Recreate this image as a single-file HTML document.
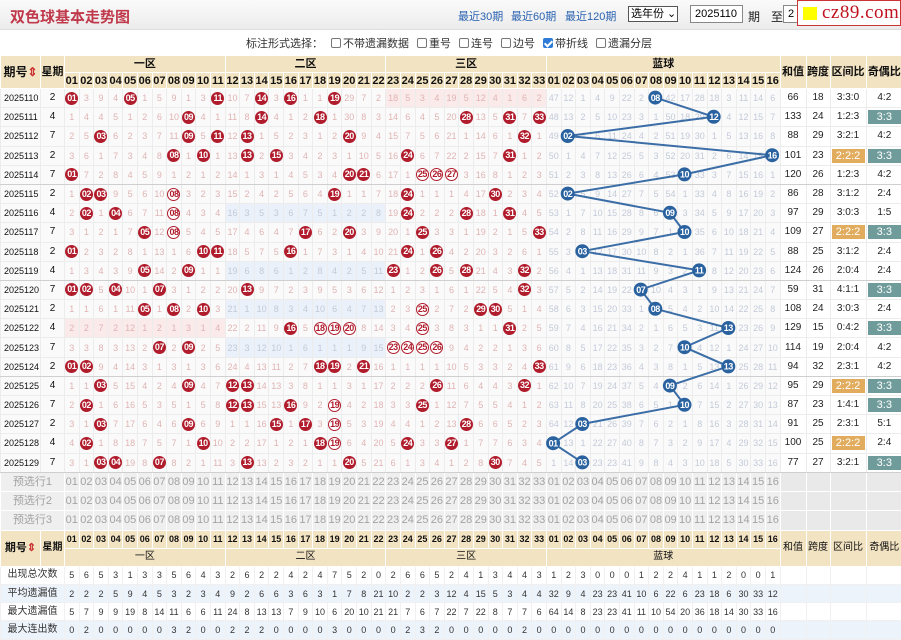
<!DOCTYPE html>
<html><head><meta charset="utf-8"><style>
*{box-sizing:border-box;margin:0;padding:0}
body{width:901px;height:639px;overflow:hidden;background:#fff;font-family:"Liberation Sans","Noto Sans CJK SC",sans-serif;position:relative}
#top{position:absolute;left:0;top:0;width:901px;height:30px;background:linear-gradient(#fafafa,#ececec);border-bottom:1px solid #ddd}
#top h1{position:absolute;left:10px;top:6px;font-size:15px;color:#c0394b;font-weight:bold;letter-spacing:0px}
.lk{position:absolute;top:8px;font-size:11px;color:#2a62b0}
.sel{position:absolute;left:628px;top:6px;width:50px;height:16px;border:1px solid #555;font-size:11px;line-height:14px;padding-left:2px;background:#fff}
.inp{position:absolute;top:5px;height:18px;border:1px solid #888;font-size:11px;line-height:16px;padding-left:4px;background:#fff}
.tx{position:absolute;top:8px;font-size:12px;color:#222}
#logo{position:absolute;left:797px;top:0;width:104px;height:26px;background:#fff;border:1px solid #c33}
#logo i{position:absolute;left:5px;top:6px;width:14px;height:13px;background:#ff0}
#logo span{position:absolute;left:24px;top:1px;font:19px "Liberation Serif",serif;color:#c1121f;letter-spacing:0.5px}
#opt{position:absolute;left:246px;top:35px;font-size:11px;color:#333;white-space:nowrap}
#opt .c{display:inline-block;width:10px;height:10px;border:1px solid #777;border-radius:2px;vertical-align:-1px;margin:0 2px 0 8px;background:#fff}
#opt .k{background:#2f7bd8;border-color:#2f7bd8;position:relative}
#opt .k:after{content:"";position:absolute;left:2px;top:0px;width:3px;height:6px;border:solid #fff;border-width:0 2px 2px 0;transform:rotate(45deg)}
table{position:absolute;left:0;top:55px;width:901px;border-collapse:collapse;table-layout:fixed}
td{border:1px solid #ececec;text-align:center;font-size:9px;color:#e0b4b4;overflow:hidden;white-space:nowrap;padding:0;line-height:10px}
col.z{border-left:1px solid #c9c9c9}
.h td{background:#f2e3c2;color:#111;font-weight:bold;font-size:11px;border-color:#fff}
.h1 td{height:17px}.h2 td{height:16px}
.h .n{font-size:11px;letter-spacing:-0.3px}
tr.d td{height:19.2px;background:#fafafa}
tr.d td.i{color:#111;font-size:9px;text-align:left;padding-left:3px}
tr.d td.w{color:#111;font-size:10px}
tr.d td.bl{color:#c3cad8}
tr.d td.r{color:#222;font-size:10px;background:#fff}
tr.d td.p{background:#fbeaea}
tr.d td.q{background:#eaf1fa;color:#c3cad8}
tr.g td{border-bottom:1px solid #cfcfcf}
b{display:inline-block;width:13px;height:13px;border-radius:50%;background:#b01c2c;color:#fff;font:bold 9px/13px "Liberation Sans",sans-serif;letter-spacing:-0.5px}
b.o{background:#fff;border:1.5px solid #b01c2c;color:#b01c2c;line-height:10px}
.y{display:block;margin:2px 1px;height:14px;line-height:14px;color:#fff;font-size:11px}
.ya{background:#e1ac5d}.yb{background:#6f9c9b}
tr.s td{height:19.3px;background:#efefef;color:#a3a3a3;font-size:11px;border-color:#fff}
tr.s td.e{background:#e9e9e9}
.hb td{background:#f2e3c2;color:#111;font-size:9px;font-weight:bold;border-color:#fff;height:18px}
.hb td.l{font-size:10px;font-weight:normal}
tr.t td{height:18.25px;color:#333;font-size:9px;background:#fff;border-color:#f0f0f0}
tr.t.u td{background:#edf3fa}
tr.t td.lb{font-size:10px;color:#333}
svg{position:absolute;left:0;top:0}
</style></head><body>
<div id="top"><h1>双色球基本走势图</h1>
<span class="lk" style="left:458px">最近30期</span><span class="lk" style="left:511px">最近60期</span><span class="lk" style="left:565px">最近120期</span>
<div class="sel">选年份 ⌄</div>
<div class="inp" style="left:690px;width:53px">2025110</div><span class="tx" style="left:748px">期</span><span class="tx" style="left:771px">至</span>
<div class="inp" style="left:783px;width:20px">2</div>
<div id="logo"><i></i><span>cz89.com</span></div></div>
<div id="opt">标注形式选择：<span class="c"></span>不带遗漏数据<span class="c"></span>重号<span class="c"></span>连号<span class="c"></span>边号<span class="c k"></span>带折线<span class="c"></span>遗漏分层</div>
<table>
<colgroup><col style="width:40px"><col style="width:24px"><col span="11" style="width:14.6px"><col class="z" span="11" style="width:14.6px"><col class="z" span="11" style="width:14.6px"><col class="z" span="16" style="width:14.6px"><col class="z" style="width:26px"><col style="width:24px"><col style="width:36px"><col style="width:36.6px"></colgroup>
<tr class="h h1"><td rowspan="2" style="font-size:12px">期号<span style="color:#c33">⇕</span></td><td rowspan="2" style="font-size:11px">星期</td><td colspan="11">一区</td><td colspan="11">二区</td><td colspan="11">三区</td><td colspan="16">蓝球</td><td rowspan="2">和值</td><td rowspan="2">跨度</td><td rowspan="2">区间比</td><td rowspan="2">奇偶比</td></tr>
<tr class="h h2 n"><td>01</td><td>02</td><td>03</td><td>04</td><td>05</td><td>06</td><td>07</td><td>08</td><td>09</td><td>10</td><td>11</td><td>12</td><td>13</td><td>14</td><td>15</td><td>16</td><td>17</td><td>18</td><td>19</td><td>20</td><td>21</td><td>22</td><td>23</td><td>24</td><td>25</td><td>26</td><td>27</td><td>28</td><td>29</td><td>30</td><td>31</td><td>32</td><td>33</td><td>01</td><td>02</td><td>03</td><td>04</td><td>05</td><td>06</td><td>07</td><td>08</td><td>09</td><td>10</td><td>11</td><td>12</td><td>13</td><td>14</td><td>15</td><td>16</td></tr>

<tr class="d"><td class="i">2025110</td><td class="w">2</td><td><b>01</b></td><td>3</td><td>9</td><td>4</td><td><b>05</b></td><td>1</td><td>5</td><td>9</td><td>1</td><td>3</td><td><b>11</b></td><td>10</td><td>7</td><td><b>14</b></td><td>3</td><td><b>16</b></td><td>1</td><td>1</td><td><b>19</b></td><td>29</td><td>7</td><td>2</td><td class="p">18</td><td class="p">5</td><td class="p">3</td><td class="p">4</td><td class="p">19</td><td class="p">5</td><td class="p">12</td><td class="p">4</td><td class="p">1</td><td class="p">6</td><td class="p">2</td><td class="bl">47</td><td class="bl">12</td><td class="bl">1</td><td class="bl">4</td><td class="bl">9</td><td class="bl">22</td><td class="bl">2</td><td></td><td class="bl">42</td><td class="bl">17</td><td class="bl">28</td><td class="bl">18</td><td class="bl">3</td><td class="bl">11</td><td class="bl">14</td><td class="bl">6</td><td class="r">66</td><td class="r">18</td><td class="r">3:3:0</td><td class="r">4:2</td></tr>
<tr class="d"><td class="i">2025111</td><td class="w">4</td><td>1</td><td>4</td><td>4</td><td>5</td><td>1</td><td>2</td><td>6</td><td>10</td><td><b>09</b></td><td>4</td><td>1</td><td>11</td><td>8</td><td><b>14</b></td><td>4</td><td>1</td><td>2</td><td><b>18</b></td><td>1</td><td>30</td><td>8</td><td>3</td><td>14</td><td>6</td><td>4</td><td>5</td><td>20</td><td><b>28</b></td><td>13</td><td>5</td><td><b>31</b></td><td>7</td><td><b>33</b></td><td class="bl">48</td><td class="bl">13</td><td class="bl">2</td><td class="bl">5</td><td class="bl">10</td><td class="bl">23</td><td class="bl">3</td><td class="bl">1</td><td class="bl">50</td><td class="bl">18</td><td class="bl">29</td><td></td><td class="bl">4</td><td class="bl">12</td><td class="bl">15</td><td class="bl">7</td><td class="r">133</td><td class="r">24</td><td class="r">1:2:3</td><td class="r"><span class="y yb">3:3</span></td></tr>
<tr class="d"><td class="i">2025112</td><td class="w">7</td><td>2</td><td>5</td><td><b>03</b></td><td>6</td><td>2</td><td>3</td><td>7</td><td>11</td><td><b>09</b></td><td>5</td><td><b>11</b></td><td>12</td><td><b>13</b></td><td>1</td><td>5</td><td>2</td><td>3</td><td>1</td><td>2</td><td><b>20</b></td><td>9</td><td>4</td><td>15</td><td>7</td><td>5</td><td>6</td><td>21</td><td>1</td><td>14</td><td>6</td><td>1</td><td><b>32</b></td><td>1</td><td class="bl">49</td><td></td><td class="bl">4</td><td class="bl">6</td><td class="bl">11</td><td class="bl">24</td><td class="bl">4</td><td class="bl">2</td><td class="bl">51</td><td class="bl">19</td><td class="bl">30</td><td class="bl">1</td><td class="bl">5</td><td class="bl">13</td><td class="bl">16</td><td class="bl">8</td><td class="r">88</td><td class="r">29</td><td class="r">3:2:1</td><td class="r">4:2</td></tr>
<tr class="d"><td class="i">2025113</td><td class="w">2</td><td>3</td><td>6</td><td>1</td><td>7</td><td>3</td><td>4</td><td>8</td><td><b>08</b></td><td>1</td><td><b>10</b></td><td>1</td><td>13</td><td><b>13</b></td><td>2</td><td><b>15</b></td><td>3</td><td>4</td><td>2</td><td>3</td><td>1</td><td>10</td><td>5</td><td>16</td><td><b>24</b></td><td>6</td><td>7</td><td>22</td><td>2</td><td>15</td><td>7</td><td><b>31</b></td><td>1</td><td>2</td><td class="bl">50</td><td class="bl">1</td><td class="bl">4</td><td class="bl">7</td><td class="bl">12</td><td class="bl">25</td><td class="bl">5</td><td class="bl">3</td><td class="bl">52</td><td class="bl">20</td><td class="bl">31</td><td class="bl">2</td><td class="bl">6</td><td class="bl">14</td><td class="bl">15</td><td></td><td class="r">101</td><td class="r">23</td><td class="r"><span class="y ya">2:2:2</span></td><td class="r"><span class="y yb">3:3</span></td></tr>
<tr class="d g"><td class="i">2025114</td><td class="w">7</td><td><b>01</b></td><td>7</td><td>2</td><td>8</td><td>4</td><td>5</td><td>9</td><td>1</td><td>2</td><td>1</td><td>2</td><td>14</td><td>1</td><td>3</td><td>1</td><td>4</td><td>5</td><td>3</td><td>4</td><td><b>20</b></td><td><b>21</b></td><td>6</td><td>17</td><td>1</td><td><b class="o">25</b></td><td><b class="o">26</b></td><td><b class="o">27</b></td><td>3</td><td>16</td><td>8</td><td>1</td><td>2</td><td>3</td><td class="bl">51</td><td class="bl">2</td><td class="bl">3</td><td class="bl">8</td><td class="bl">13</td><td class="bl">26</td><td class="bl">6</td><td class="bl">4</td><td class="bl">53</td><td></td><td class="bl">33</td><td class="bl">3</td><td class="bl">7</td><td class="bl">15</td><td class="bl">16</td><td class="bl">1</td><td class="r">120</td><td class="r">26</td><td class="r">1:2:3</td><td class="r">4:2</td></tr>
<tr class="d"><td class="i">2025115</td><td class="w">2</td><td>1</td><td><b>02</b></td><td><b>03</b></td><td>9</td><td>5</td><td>6</td><td>10</td><td><b class="o">08</b></td><td>3</td><td>2</td><td>3</td><td>15</td><td>2</td><td>4</td><td>2</td><td>5</td><td>6</td><td>4</td><td><b>19</b></td><td>1</td><td>1</td><td>7</td><td>18</td><td><b>24</b></td><td>1</td><td>1</td><td>1</td><td>4</td><td>17</td><td><b>30</b></td><td>2</td><td>3</td><td>4</td><td class="bl">52</td><td></td><td class="bl">5</td><td class="bl">9</td><td class="bl">14</td><td class="bl">27</td><td class="bl">7</td><td class="bl">5</td><td class="bl">54</td><td class="bl">1</td><td class="bl">33</td><td class="bl">4</td><td class="bl">8</td><td class="bl">16</td><td class="bl">19</td><td class="bl">2</td><td class="r">86</td><td class="r">28</td><td class="r">3:1:2</td><td class="r">2:4</td></tr>
<tr class="d"><td class="i">2025116</td><td class="w">4</td><td>2</td><td><b>02</b></td><td>1</td><td><b>04</b></td><td>6</td><td>7</td><td>11</td><td><b class="o">08</b></td><td>4</td><td>3</td><td>4</td><td class="q">16</td><td class="q">3</td><td class="q">5</td><td class="q">3</td><td class="q">6</td><td class="q">7</td><td class="q">5</td><td class="q">1</td><td class="q">2</td><td class="q">2</td><td class="q">8</td><td>19</td><td><b>24</b></td><td>2</td><td>2</td><td>2</td><td><b>28</b></td><td>18</td><td>1</td><td><b>31</b></td><td>4</td><td>5</td><td class="bl">53</td><td class="bl">1</td><td class="bl">7</td><td class="bl">10</td><td class="bl">15</td><td class="bl">28</td><td class="bl">8</td><td class="bl">6</td><td></td><td class="bl">3</td><td class="bl">34</td><td class="bl">5</td><td class="bl">9</td><td class="bl">17</td><td class="bl">20</td><td class="bl">3</td><td class="r">97</td><td class="r">29</td><td class="r">3:0:3</td><td class="r">1:5</td></tr>
<tr class="d"><td class="i">2025117</td><td class="w">7</td><td>3</td><td>1</td><td>2</td><td>1</td><td>7</td><td><b>05</b></td><td>12</td><td><b class="o">08</b></td><td>5</td><td>4</td><td>5</td><td>17</td><td>4</td><td>6</td><td>4</td><td>7</td><td><b>17</b></td><td>6</td><td>2</td><td><b>20</b></td><td>3</td><td>9</td><td>20</td><td>1</td><td><b>25</b></td><td>3</td><td>3</td><td>1</td><td>19</td><td>2</td><td>1</td><td>5</td><td><b>33</b></td><td class="bl">54</td><td class="bl">2</td><td class="bl">8</td><td class="bl">11</td><td class="bl">16</td><td class="bl">29</td><td class="bl">9</td><td class="bl">7</td><td class="bl">1</td><td></td><td class="bl">35</td><td class="bl">6</td><td class="bl">10</td><td class="bl">18</td><td class="bl">21</td><td class="bl">4</td><td class="r">109</td><td class="r">27</td><td class="r"><span class="y ya">2:2:2</span></td><td class="r"><span class="y yb">3:3</span></td></tr>
<tr class="d"><td class="i">2025118</td><td class="w">2</td><td><b>01</b></td><td>2</td><td>3</td><td>2</td><td>8</td><td>1</td><td>13</td><td>1</td><td>6</td><td><b>10</b></td><td><b>11</b></td><td>18</td><td>5</td><td>7</td><td>5</td><td><b>16</b></td><td>1</td><td>7</td><td>3</td><td>1</td><td>4</td><td>10</td><td>21</td><td><b>24</b></td><td>1</td><td><b>26</b></td><td>4</td><td>2</td><td>20</td><td>3</td><td>2</td><td>6</td><td>1</td><td class="bl">55</td><td class="bl">3</td><td></td><td class="bl">12</td><td class="bl">17</td><td class="bl">30</td><td class="bl">10</td><td class="bl">8</td><td class="bl">2</td><td class="bl">1</td><td class="bl">36</td><td class="bl">7</td><td class="bl">11</td><td class="bl">19</td><td class="bl">22</td><td class="bl">5</td><td class="r">88</td><td class="r">25</td><td class="r">3:1:2</td><td class="r">2:4</td></tr>
<tr class="d g"><td class="i">2025119</td><td class="w">4</td><td>1</td><td>3</td><td>4</td><td>3</td><td>9</td><td><b>05</b></td><td>14</td><td>2</td><td><b>09</b></td><td>1</td><td>1</td><td class="q">19</td><td class="q">6</td><td class="q">8</td><td class="q">6</td><td class="q">1</td><td class="q">2</td><td class="q">8</td><td class="q">4</td><td class="q">2</td><td class="q">5</td><td class="q">11</td><td><b>23</b></td><td>1</td><td>2</td><td><b>26</b></td><td>5</td><td><b>28</b></td><td>21</td><td>4</td><td>3</td><td><b>32</b></td><td>2</td><td class="bl">56</td><td class="bl">4</td><td class="bl">1</td><td class="bl">13</td><td class="bl">18</td><td class="bl">31</td><td class="bl">11</td><td class="bl">9</td><td class="bl">3</td><td class="bl">2</td><td></td><td class="bl">8</td><td class="bl">12</td><td class="bl">20</td><td class="bl">23</td><td class="bl">6</td><td class="r">124</td><td class="r">26</td><td class="r">2:0:4</td><td class="r">2:4</td></tr>
<tr class="d"><td class="i">2025120</td><td class="w">7</td><td><b>01</b></td><td><b>02</b></td><td>5</td><td><b>04</b></td><td>10</td><td>1</td><td><b>07</b></td><td>3</td><td>1</td><td>2</td><td>2</td><td>20</td><td><b>13</b></td><td>9</td><td>7</td><td>2</td><td>3</td><td>9</td><td>5</td><td>3</td><td>6</td><td>12</td><td>1</td><td>2</td><td>3</td><td>1</td><td>6</td><td>1</td><td>22</td><td>5</td><td>4</td><td><b>32</b></td><td>3</td><td class="bl">57</td><td class="bl">5</td><td class="bl">2</td><td class="bl">14</td><td class="bl">19</td><td class="bl">22</td><td></td><td class="bl">10</td><td class="bl">4</td><td class="bl">3</td><td class="bl">1</td><td class="bl">9</td><td class="bl">13</td><td class="bl">21</td><td class="bl">24</td><td class="bl">7</td><td class="r">59</td><td class="r">31</td><td class="r">4:1:1</td><td class="r"><span class="y yb">3:3</span></td></tr>
<tr class="d"><td class="i">2025121</td><td class="w">2</td><td>1</td><td>1</td><td>6</td><td>1</td><td>11</td><td><b>05</b></td><td>1</td><td><b>08</b></td><td>2</td><td><b>10</b></td><td>3</td><td class="q">21</td><td class="q">1</td><td class="q">10</td><td class="q">8</td><td class="q">3</td><td class="q">4</td><td class="q">10</td><td class="q">6</td><td class="q">4</td><td class="q">7</td><td class="q">13</td><td>2</td><td>3</td><td><b class="o">25</b></td><td>2</td><td>7</td><td>2</td><td><b>29</b></td><td><b>30</b></td><td>5</td><td>1</td><td>4</td><td class="bl">58</td><td class="bl">6</td><td class="bl">3</td><td class="bl">15</td><td class="bl">20</td><td class="bl">33</td><td class="bl">1</td><td></td><td class="bl">5</td><td class="bl">4</td><td class="bl">2</td><td class="bl">10</td><td class="bl">14</td><td class="bl">22</td><td class="bl">25</td><td class="bl">8</td><td class="r">108</td><td class="r">24</td><td class="r">3:0:3</td><td class="r">2:4</td></tr>
<tr class="d"><td class="i">2025122</td><td class="w">4</td><td class="p">2</td><td class="p">2</td><td class="p">7</td><td class="p">2</td><td class="p">12</td><td class="p">1</td><td class="p">2</td><td class="p">1</td><td class="p">3</td><td class="p">1</td><td class="p">4</td><td>22</td><td>2</td><td>11</td><td>9</td><td><b>16</b></td><td>5</td><td><b class="o">18</b></td><td><b class="o">19</b></td><td><b class="o">20</b></td><td>8</td><td>14</td><td>3</td><td>4</td><td><b class="o">25</b></td><td>3</td><td>8</td><td>3</td><td>1</td><td>1</td><td><b>31</b></td><td>2</td><td>5</td><td class="bl">59</td><td class="bl">7</td><td class="bl">4</td><td class="bl">16</td><td class="bl">21</td><td class="bl">34</td><td class="bl">2</td><td class="bl">1</td><td class="bl">6</td><td class="bl">5</td><td class="bl">3</td><td class="bl">11</td><td></td><td class="bl">23</td><td class="bl">26</td><td class="bl">9</td><td class="r">129</td><td class="r">15</td><td class="r">0:4:2</td><td class="r"><span class="y yb">3:3</span></td></tr>
<tr class="d"><td class="i">2025123</td><td class="w">7</td><td>3</td><td>3</td><td>8</td><td>3</td><td>13</td><td>2</td><td><b>07</b></td><td>2</td><td><b>09</b></td><td>2</td><td>5</td><td class="q">23</td><td class="q">3</td><td class="q">12</td><td class="q">10</td><td class="q">1</td><td class="q">6</td><td class="q">1</td><td class="q">1</td><td class="q">1</td><td class="q">9</td><td class="q">15</td><td><b class="o">23</b></td><td><b class="o">24</b></td><td><b class="o">25</b></td><td><b class="o">26</b></td><td>9</td><td>4</td><td>2</td><td>2</td><td>1</td><td>3</td><td>6</td><td class="bl">60</td><td class="bl">8</td><td class="bl">5</td><td class="bl">17</td><td class="bl">22</td><td class="bl">35</td><td class="bl">3</td><td class="bl">2</td><td class="bl">7</td><td></td><td class="bl">4</td><td class="bl">12</td><td class="bl">1</td><td class="bl">24</td><td class="bl">27</td><td class="bl">10</td><td class="r">114</td><td class="r">19</td><td class="r">2:0:4</td><td class="r">4:2</td></tr>
<tr class="d g"><td class="i">2025124</td><td class="w">2</td><td><b>01</b></td><td><b>02</b></td><td>9</td><td>4</td><td>14</td><td>3</td><td>1</td><td>3</td><td>1</td><td>3</td><td>6</td><td>24</td><td>4</td><td>13</td><td>11</td><td>2</td><td>7</td><td><b>18</b></td><td><b>19</b></td><td>2</td><td><b>21</b></td><td>16</td><td>1</td><td>1</td><td>1</td><td>1</td><td>10</td><td>5</td><td>3</td><td>3</td><td>2</td><td>4</td><td><b>33</b></td><td class="bl">61</td><td class="bl">9</td><td class="bl">6</td><td class="bl">18</td><td class="bl">23</td><td class="bl">36</td><td class="bl">4</td><td class="bl">3</td><td class="bl">8</td><td class="bl">1</td><td class="bl">5</td><td class="bl">13</td><td></td><td class="bl">25</td><td class="bl">28</td><td class="bl">11</td><td class="r">94</td><td class="r">32</td><td class="r">2:3:1</td><td class="r">4:2</td></tr>
<tr class="d"><td class="i">2025125</td><td class="w">4</td><td>1</td><td>1</td><td><b>03</b></td><td>5</td><td>15</td><td>4</td><td>2</td><td>4</td><td><b>09</b></td><td>4</td><td>7</td><td><b>12</b></td><td><b>13</b></td><td>14</td><td>13</td><td>3</td><td>8</td><td>1</td><td>1</td><td>3</td><td>1</td><td>17</td><td>2</td><td>2</td><td>2</td><td><b>26</b></td><td>11</td><td>6</td><td>4</td><td>4</td><td>3</td><td><b>32</b></td><td>1</td><td class="bl">62</td><td class="bl">10</td><td class="bl">7</td><td class="bl">19</td><td class="bl">24</td><td class="bl">37</td><td class="bl">5</td><td class="bl">4</td><td></td><td class="bl">2</td><td class="bl">6</td><td class="bl">14</td><td class="bl">1</td><td class="bl">26</td><td class="bl">29</td><td class="bl">12</td><td class="r">95</td><td class="r">29</td><td class="r"><span class="y ya">2:2:2</span></td><td class="r"><span class="y yb">3:3</span></td></tr>
<tr class="d"><td class="i">2025126</td><td class="w">7</td><td>2</td><td><b>02</b></td><td>1</td><td>6</td><td>16</td><td>5</td><td>3</td><td>5</td><td>1</td><td>5</td><td>8</td><td><b>12</b></td><td><b>13</b></td><td>15</td><td>13</td><td><b>16</b></td><td>9</td><td>2</td><td><b class="o">19</b></td><td>4</td><td>2</td><td>18</td><td>3</td><td>3</td><td><b>25</b></td><td>1</td><td>12</td><td>7</td><td>5</td><td>5</td><td>4</td><td>1</td><td>2</td><td class="bl">63</td><td class="bl">11</td><td class="bl">8</td><td class="bl">20</td><td class="bl">25</td><td class="bl">38</td><td class="bl">6</td><td class="bl">5</td><td class="bl">1</td><td></td><td class="bl">7</td><td class="bl">15</td><td class="bl">2</td><td class="bl">27</td><td class="bl">30</td><td class="bl">13</td><td class="r">87</td><td class="r">23</td><td class="r">1:4:1</td><td class="r"><span class="y yb">3:3</span></td></tr>
<tr class="d"><td class="i">2025127</td><td class="w">2</td><td>3</td><td>1</td><td><b>03</b></td><td>7</td><td>17</td><td>6</td><td>4</td><td>6</td><td><b>09</b></td><td>6</td><td>9</td><td>1</td><td>1</td><td>16</td><td><b>15</b></td><td>1</td><td><b>17</b></td><td>3</td><td><b class="o">19</b></td><td>5</td><td>3</td><td>19</td><td>4</td><td>4</td><td>1</td><td>2</td><td>13</td><td><b>28</b></td><td>6</td><td>6</td><td>5</td><td>2</td><td>3</td><td class="bl">64</td><td class="bl">12</td><td></td><td class="bl">21</td><td class="bl">26</td><td class="bl">39</td><td class="bl">7</td><td class="bl">6</td><td class="bl">2</td><td class="bl">1</td><td class="bl">8</td><td class="bl">16</td><td class="bl">3</td><td class="bl">28</td><td class="bl">31</td><td class="bl">14</td><td class="r">91</td><td class="r">25</td><td class="r">2:3:1</td><td class="r">5:1</td></tr>
<tr class="d"><td class="i">2025128</td><td class="w">4</td><td>4</td><td><b>02</b></td><td>1</td><td>8</td><td>18</td><td>7</td><td>5</td><td>7</td><td>1</td><td><b>10</b></td><td>10</td><td>2</td><td>2</td><td>17</td><td>1</td><td>2</td><td>1</td><td><b>18</b></td><td><b class="o">19</b></td><td>6</td><td>4</td><td>20</td><td>5</td><td><b>24</b></td><td>3</td><td>3</td><td><b>27</b></td><td>1</td><td>7</td><td>7</td><td>6</td><td>3</td><td>4</td><td></td><td class="bl">13</td><td class="bl">1</td><td class="bl">22</td><td class="bl">27</td><td class="bl">40</td><td class="bl">8</td><td class="bl">7</td><td class="bl">3</td><td class="bl">2</td><td class="bl">9</td><td class="bl">17</td><td class="bl">4</td><td class="bl">29</td><td class="bl">32</td><td class="bl">15</td><td class="r">100</td><td class="r">25</td><td class="r"><span class="y ya">2:2:2</span></td><td class="r">2:4</td></tr>
<tr class="d g"><td class="i">2025129</td><td class="w">7</td><td>3</td><td>1</td><td><b>03</b></td><td><b>04</b></td><td>19</td><td>8</td><td><b>07</b></td><td>8</td><td>2</td><td>1</td><td>11</td><td>3</td><td><b>13</b></td><td>13</td><td>2</td><td>3</td><td>2</td><td>1</td><td>1</td><td><b>20</b></td><td>5</td><td>21</td><td>6</td><td>1</td><td>3</td><td>4</td><td>1</td><td>2</td><td>8</td><td><b>30</b></td><td>7</td><td>4</td><td>5</td><td class="bl">1</td><td class="bl">14</td><td></td><td class="bl">23</td><td class="bl">23</td><td class="bl">41</td><td class="bl">9</td><td class="bl">8</td><td class="bl">4</td><td class="bl">3</td><td class="bl">10</td><td class="bl">18</td><td class="bl">5</td><td class="bl">30</td><td class="bl">33</td><td class="bl">16</td><td class="r">77</td><td class="r">27</td><td class="r">3:2:1</td><td class="r"><span class="y yb">3:3</span></td></tr>

<tr class="s"><td colspan="2">预选行1</td><td>01</td><td>02</td><td>03</td><td>04</td><td>05</td><td>06</td><td>07</td><td>08</td><td>09</td><td>10</td><td>11</td><td>12</td><td>13</td><td>14</td><td>15</td><td>16</td><td>17</td><td>18</td><td>19</td><td>20</td><td>21</td><td>22</td><td>23</td><td>24</td><td>25</td><td>26</td><td>27</td><td>28</td><td>29</td><td>30</td><td>31</td><td>32</td><td>33</td><td>01</td><td>02</td><td>03</td><td>04</td><td>05</td><td>06</td><td>07</td><td>08</td><td>09</td><td>10</td><td>11</td><td>12</td><td>13</td><td>14</td><td>15</td><td>16</td><td class="e"></td><td class="e"></td><td class="e"></td><td class="e"></td></tr>
<tr class="s"><td colspan="2">预选行2</td><td>01</td><td>02</td><td>03</td><td>04</td><td>05</td><td>06</td><td>07</td><td>08</td><td>09</td><td>10</td><td>11</td><td>12</td><td>13</td><td>14</td><td>15</td><td>16</td><td>17</td><td>18</td><td>19</td><td>20</td><td>21</td><td>22</td><td>23</td><td>24</td><td>25</td><td>26</td><td>27</td><td>28</td><td>29</td><td>30</td><td>31</td><td>32</td><td>33</td><td>01</td><td>02</td><td>03</td><td>04</td><td>05</td><td>06</td><td>07</td><td>08</td><td>09</td><td>10</td><td>11</td><td>12</td><td>13</td><td>14</td><td>15</td><td>16</td><td class="e"></td><td class="e"></td><td class="e"></td><td class="e"></td></tr>
<tr class="s"><td colspan="2">预选行3</td><td>01</td><td>02</td><td>03</td><td>04</td><td>05</td><td>06</td><td>07</td><td>08</td><td>09</td><td>10</td><td>11</td><td>12</td><td>13</td><td>14</td><td>15</td><td>16</td><td>17</td><td>18</td><td>19</td><td>20</td><td>21</td><td>22</td><td>23</td><td>24</td><td>25</td><td>26</td><td>27</td><td>28</td><td>29</td><td>30</td><td>31</td><td>32</td><td>33</td><td>01</td><td>02</td><td>03</td><td>04</td><td>05</td><td>06</td><td>07</td><td>08</td><td>09</td><td>10</td><td>11</td><td>12</td><td>13</td><td>14</td><td>15</td><td>16</td><td class="e"></td><td class="e"></td><td class="e"></td><td class="e"></td></tr>

<tr class="hb"><td rowspan="2" style="font-size:11px">期号<span style="color:#c33">⇕</span></td><td rowspan="2" style="font-size:10px">星期</td><td>01</td><td>02</td><td>03</td><td>04</td><td>05</td><td>06</td><td>07</td><td>08</td><td>09</td><td>10</td><td>11</td><td>12</td><td>13</td><td>14</td><td>15</td><td>16</td><td>17</td><td>18</td><td>19</td><td>20</td><td>21</td><td>22</td><td>23</td><td>24</td><td>25</td><td>26</td><td>27</td><td>28</td><td>29</td><td>30</td><td>31</td><td>32</td><td>33</td><td>01</td><td>02</td><td>03</td><td>04</td><td>05</td><td>06</td><td>07</td><td>08</td><td>09</td><td>10</td><td>11</td><td>12</td><td>13</td><td>14</td><td>15</td><td>16</td><td rowspan="2" class="l">和值</td><td rowspan="2" class="l">跨度</td><td rowspan="2" class="l">区间比</td><td rowspan="2" class="l">奇偶比</td></tr>
<tr class="hb"><td colspan="11" class="l">一区</td><td colspan="11" class="l">二区</td><td colspan="11" class="l">三区</td><td colspan="16" class="l">蓝球</td></tr>

<tr class="t"><td colspan="2" class="lb">出现总次数</td><td>5</td><td>6</td><td>5</td><td>3</td><td>1</td><td>3</td><td>3</td><td>5</td><td>6</td><td>4</td><td>3</td><td>2</td><td>6</td><td>2</td><td>2</td><td>4</td><td>2</td><td>4</td><td>7</td><td>5</td><td>2</td><td>0</td><td>2</td><td>6</td><td>6</td><td>5</td><td>2</td><td>4</td><td>1</td><td>3</td><td>4</td><td>4</td><td>3</td><td>1</td><td>2</td><td>3</td><td>0</td><td>0</td><td>0</td><td>1</td><td>2</td><td>2</td><td>4</td><td>1</td><td>1</td><td>2</td><td>0</td><td>0</td><td>1</td><td></td><td></td><td></td><td></td></tr>
<tr class="t u"><td colspan="2" class="lb">平均遗漏值</td><td>2</td><td>2</td><td>2</td><td>5</td><td>9</td><td>4</td><td>5</td><td>3</td><td>2</td><td>3</td><td>4</td><td>9</td><td>2</td><td>6</td><td>6</td><td>3</td><td>6</td><td>3</td><td>1</td><td>7</td><td>8</td><td>21</td><td>10</td><td>2</td><td>2</td><td>3</td><td>12</td><td>4</td><td>15</td><td>5</td><td>3</td><td>4</td><td>4</td><td>32</td><td>9</td><td>4</td><td>23</td><td>23</td><td>41</td><td>10</td><td>6</td><td>22</td><td>6</td><td>23</td><td>18</td><td>6</td><td>30</td><td>33</td><td>12</td><td></td><td></td><td></td><td></td></tr>
<tr class="t"><td colspan="2" class="lb">最大遗漏值</td><td>5</td><td>7</td><td>9</td><td>9</td><td>19</td><td>8</td><td>14</td><td>11</td><td>6</td><td>6</td><td>11</td><td>24</td><td>8</td><td>13</td><td>13</td><td>7</td><td>9</td><td>10</td><td>6</td><td>20</td><td>10</td><td>21</td><td>21</td><td>7</td><td>6</td><td>7</td><td>22</td><td>7</td><td>22</td><td>8</td><td>7</td><td>7</td><td>6</td><td>64</td><td>14</td><td>8</td><td>23</td><td>23</td><td>41</td><td>11</td><td>10</td><td>54</td><td>20</td><td>36</td><td>18</td><td>14</td><td>30</td><td>33</td><td>16</td><td></td><td></td><td></td><td></td></tr>
<tr class="t u"><td colspan="2" class="lb">最大连出数</td><td>0</td><td>2</td><td>0</td><td>0</td><td>0</td><td>0</td><td>0</td><td>3</td><td>2</td><td>0</td><td>0</td><td>2</td><td>2</td><td>2</td><td>0</td><td>0</td><td>0</td><td>0</td><td>3</td><td>0</td><td>0</td><td>0</td><td>0</td><td>2</td><td>3</td><td>2</td><td>0</td><td>0</td><td>0</td><td>0</td><td>0</td><td>2</td><td>0</td><td>0</td><td>0</td><td>0</td><td>0</td><td>0</td><td>0</td><td>0</td><td>0</td><td>0</td><td>0</td><td>0</td><td>0</td><td>0</td><td>0</td><td>0</td><td>0</td><td></td><td></td><td></td><td></td></tr>
</table>
<svg width="901" height="639" viewBox="0 0 901 639">
<polyline fill="none" stroke="#3b6da6" stroke-width="2" points="655.3,97.6 713.7,116.8 567.7,136 772.1,155.2 684.5,174.4 567.7,193.6 669.9,212.8 684.5,232 582.3,251.2 699.1,270.4 640.7,289.6 655.3,308.8 728.3,328 684.5,347.2 728.3,366.4 669.9,385.6 684.5,404.8 582.3,424 553.1,443.2 582.3,462.4"/>
<g fill="#2a62a0"><circle cx="655.3" cy="97.6" r="7"/><circle cx="713.7" cy="116.8" r="7"/><circle cx="567.7" cy="136" r="7"/><circle cx="772.1" cy="155.2" r="7"/><circle cx="684.5" cy="174.4" r="7"/><circle cx="567.7" cy="193.6" r="7"/><circle cx="669.9" cy="212.8" r="7"/><circle cx="684.5" cy="232" r="7"/><circle cx="582.3" cy="251.2" r="7"/><circle cx="699.1" cy="270.4" r="7"/><circle cx="640.7" cy="289.6" r="7"/><circle cx="655.3" cy="308.8" r="7"/><circle cx="728.3" cy="328" r="7"/><circle cx="684.5" cy="347.2" r="7"/><circle cx="728.3" cy="366.4" r="7"/><circle cx="669.9" cy="385.6" r="7"/><circle cx="684.5" cy="404.8" r="7"/><circle cx="582.3" cy="424" r="7"/><circle cx="553.1" cy="443.2" r="7"/><circle cx="582.3" cy="462.4" r="7"/></g>
<g fill="#fff" font-family="Liberation Sans,sans-serif" font-size="9" font-weight="bold" text-anchor="middle" letter-spacing="-0.5"><text x="655.3" y="100.8">08</text><text x="713.7" y="120">12</text><text x="567.7" y="139.2">02</text><text x="772.1" y="158.4">16</text><text x="684.5" y="177.6">10</text><text x="567.7" y="196.8">02</text><text x="669.9" y="216">09</text><text x="684.5" y="235.2">10</text><text x="582.3" y="254.4">03</text><text x="699.1" y="273.6">11</text><text x="640.7" y="292.8">07</text><text x="655.3" y="312">08</text><text x="728.3" y="331.2">13</text><text x="684.5" y="350.4">10</text><text x="728.3" y="369.6">13</text><text x="669.9" y="388.8">09</text><text x="684.5" y="408">10</text><text x="582.3" y="427.2">03</text><text x="553.1" y="446.4">01</text><text x="582.3" y="465.6">03</text></g>
</svg>
</body></html>
